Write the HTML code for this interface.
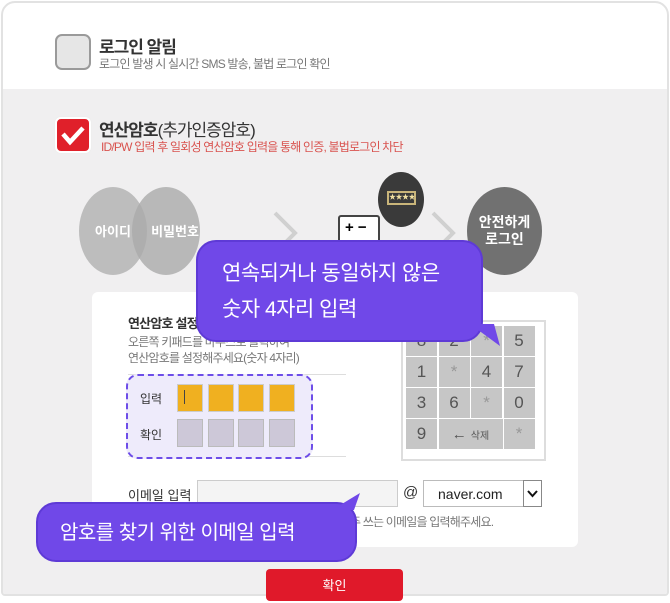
<!DOCTYPE html>
<html><head><meta charset="utf-8"><style>
*{margin:0;padding:0;box-sizing:border-box}
body{width:670px;height:597px;background:#fff;font-family:"Liberation Sans","Noto Sans CJK KR",sans-serif;position:relative;overflow:hidden}
.a{position:absolute}
.card{left:1px;top:1px;width:668px;height:595px;border:2px solid #e2e2e2;border-radius:14px 14px 4px 4px;overflow:hidden;background:#fff}
.gray{left:0;top:86px;width:668px;height:540px;background:#f0eff0}
.t{font-size:17px;font-weight:bold;color:#333;letter-spacing:-1px}
.s{font-size:12px;color:#777;letter-spacing:-.8px}
.circ{border-radius:50%;color:#fff;font-size:13px;font-weight:bold;display:flex;align-items:center;justify-content:center;text-align:center;line-height:17px;white-space:nowrap}
.kp{background:#c6c6c6;color:#555;font-size:17px;display:flex;align-items:center;justify-content:center;width:31px;height:30px}
.bub{background:#7048e8;border:2px solid #5e3ad6;border-radius:20px;color:#fff;letter-spacing:-.5px}
</style></head><body>
<div class="a card">
 <div class="a gray"></div>
</div>
<div class="a" style="left:55px;top:34px;width:36px;height:36px;border:2px solid #9a9a9a;border-radius:7px;background:#e6e6e6"></div>
<div class="a t" style="left:99px;top:33px">로그인 알림</div>
<div class="a s" style="left:99px;top:55px">로그인 발생 시 실시간 SMS 발송, 불법 로그인 확인</div>
<div class="a" style="left:55px;top:117px;width:36px;height:36px;border-radius:6px;background:#e0202a;border:2px solid #fff;box-shadow:0 0 0 1px #eee">
<svg width="32" height="32" viewBox="0 0 32 32"><path d="M6 15 L13 23 L26 9" stroke="#fff" stroke-width="4.5" fill="none"/></svg></div>
<div class="a t" style="left:99px;top:116px">연산암호<span style="font-weight:normal">(추가인증암호)</span></div>
<div class="a s" style="left:101px;top:138px;color:#d9534f">ID/PW 입력 후 일회성 연산암호 입력을 통해 인증, 불법로그인 차단</div>
<div class="a circ" style="left:79px;top:187px;width:68px;height:88px;background:#bdbdbd">아이디</div>
<div class="a circ" style="left:132px;top:187px;width:68px;height:88px;background:rgba(170,170,170,.8)"><span style="margin-left:18px">비밀번호</span></div>
<svg class="a" style="left:270px;top:208px" width="200" height="40"><path d="M5 5 L25 25 L5 45" stroke="#d0d0d0" stroke-width="4" fill="none"/><path d="M163 5 L183 25 L163 45" stroke="#d0d0d0" stroke-width="4" fill="none"/></svg>
<div class="a" style="left:338px;top:215px;width:42px;height:40px;border:2px solid #444;border-radius:3px;background:#fff;font-weight:bold;font-size:15px;padding-left:5px;line-height:22px">+ −</div>
<div class="a" style="left:378px;top:172px;width:46px;height:55px;border-radius:50%;background:#3a3a3a"></div>
<div class="a" style="left:387px;top:191px;width:29px;height:14px;border:2px solid #c9b57a;color:#f0dfa0;font-size:7px;line-height:10px;text-align:center;overflow:hidden;letter-spacing:-.5px">★★★★</div>
<div class="a circ" style="left:467px;top:187px;width:75px;height:88px;background:#717171;font-size:14px">안전하게<br>로그인</div>
<div class="a" style="left:92px;top:292px;width:486px;height:255px;background:#fff;border-radius:6px"></div>
<div class="a" style="left:128px;top:313px;font-size:13px;font-weight:bold;color:#333;letter-spacing:-.8px">연산암호 설정</div>
<div class="a s" style="left:128px;top:334px;font-size:12px;line-height:16px">오른쪽 키패드를 마우스로 클릭하여<br>연산암호를 설정해주세요(숫자 4자리)</div>
<div class="a" style="left:128px;top:374px;width:218px;height:1px;background:#ddd"></div>
<div class="a" style="left:128px;top:456px;width:218px;height:1px;background:#ddd"></div>
<div class="a" style="left:126px;top:374px;width:187px;height:85px;border:2px dashed #6d4de8;border-radius:12px;background:#eeebfb"></div>
<div class="a" style="left:140px;top:390px;font-size:12px;color:#333">입력</div>
<div class="a" style="left:140px;top:426px;font-size:12px;color:#333">확인</div>
<div class="a" style="left:177px;top:384px;width:26px;height:28px;background:#f0b020;border:1px solid #ccc"></div>
<div class="a" style="left:184px;top:390px;width:1px;height:14px;background:#444"></div>
<div class="a" style="left:208px;top:384px;width:26px;height:28px;background:#f0b020;border:1px solid #ccc"></div>
<div class="a" style="left:238px;top:384px;width:26px;height:28px;background:#f0b020;border:1px solid #ccc"></div>
<div class="a" style="left:269px;top:384px;width:26px;height:28px;background:#f0b020;border:1px solid #ccc"></div>
<div class="a" style="left:177px;top:419px;width:26px;height:28px;background:#cdc8d8;border:1px solid #bbb"></div>
<div class="a" style="left:208px;top:419px;width:26px;height:28px;background:#cdc8d8;border:1px solid #bbb"></div>
<div class="a" style="left:238px;top:419px;width:26px;height:28px;background:#cdc8d8;border:1px solid #bbb"></div>
<div class="a" style="left:269px;top:419px;width:26px;height:28px;background:#cdc8d8;border:1px solid #bbb"></div>
<div class="a" style="left:401px;top:320px;width:145px;height:141px;border:2px solid #ddd;background:#fff"></div>
<div class="a" style="left:406px;top:326px;display:grid;grid-template-columns:repeat(4,31px);gap:1px 1.5px">
<div class="kp">8</div><div class="kp">2</div><div class="kp" style="color:#999">*</div><div class="kp">5</div>
<div class="kp">1</div><div class="kp" style="color:#999">*</div><div class="kp">4</div><div class="kp">7</div>
<div class="kp">3</div><div class="kp">6</div><div class="kp" style="color:#999">*</div><div class="kp">0</div>
<div class="kp">9</div><div class="kp" style="grid-column:span 2;width:64px;font-size:10px"><b style="font-size:15px;margin-right:4px">←</b> 삭제</div><div class="kp" style="color:#999">*</div>
</div>
<div class="a" style="left:128px;top:485px;font-size:13px;color:#333">이메일 입력</div>
<div class="a" style="left:197px;top:480px;width:201px;height:27px;border:1px solid #ccc;background:#f4f4f4"></div>
<div class="a" style="left:403px;top:484px;font-size:15px;color:#333">@</div>
<div class="a" style="left:423px;top:480px;width:119px;height:27px;border:1px solid #bbb;background:#fff;font-size:14px;padding:5px 0 0 14px;color:#222">naver.com</div>
<div class="a" style="left:523px;top:480px;width:19px;height:27px;border:1px solid #888;background:#fff"><svg width="17" height="25"><path d="M4 10 L8.5 15 L13 10" stroke="#111" stroke-width="2" fill="none"/></svg></div>
<div class="a s" style="left:350px;top:513px;font-size:12px">주 쓰는 이메일을 입력해주세요.</div>
<div class="a bub" style="left:196px;top:240px;width:287px;height:102px;padding:14px 0 0 24px;font-size:21px;line-height:36px">연속되거나 동일하지 않은<br>숫자 4자리 입력</div>
<svg class="a" style="left:470px;top:320px" width="40" height="30"><path d="M0 4 L24 4 L30 26 Z" fill="#7048e8"/></svg>
<div class="a bub" style="left:36px;top:502px;width:321px;height:60px;padding:12px 0 0 22px;font-size:20px">암호를 찾기 위한 이메일 입력</div>
<svg class="a" style="left:330px;top:490px" width="40" height="20"><path d="M2 20 L30 3 L24 20 Z" fill="#7048e8"/></svg>
<div class="a" style="left:266px;top:569px;width:137px;height:32px;background:#e0192a;border-radius:4px;color:#fff;font-size:13px;text-align:center;line-height:34px">확인</div>
</body></html>
